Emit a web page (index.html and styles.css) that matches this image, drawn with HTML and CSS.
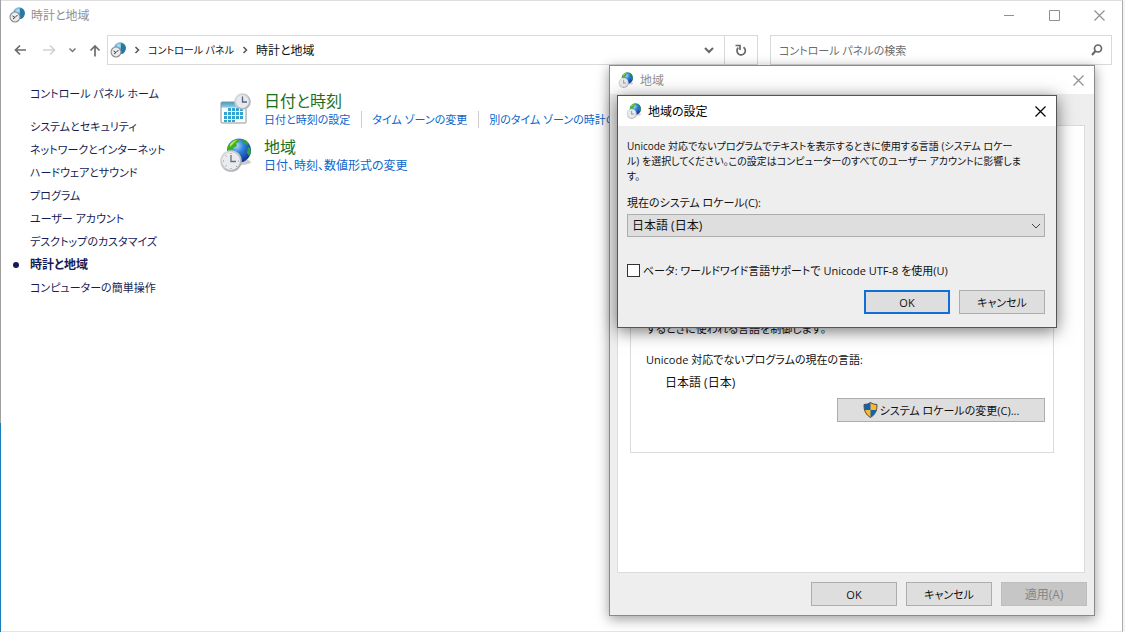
FILE: index.html
```html
<!DOCTYPE html>
<html lang="ja">
<head>
  <meta charset="UTF-8" />
  <title>時計と地域</title>
  <link rel="stylesheet" href="styles.css">
</head>
<body>

<!-- shared icons -->
<svg class="defs" aria-hidden="true">
  <defs>
    <radialGradient id="sea" cx="40%" cy="30%" r="75%">
      <stop offset="0" stop-color="#a9dcfa" />
      <stop offset="0.4" stop-color="#2f7fdc" />
      <stop offset="1" stop-color="#0a2c8c" />
    </radialGradient>
    <radialGradient id="seaPale" cx="40%" cy="30%" r="75%">
      <stop offset="0" stop-color="#c4e6f4" />
      <stop offset="0.5" stop-color="#4a9cc4" />
      <stop offset="1" stop-color="#14507e" />
    </radialGradient>
    <linearGradient id="rim" x1="0" y1="0" x2="1" y2="1">
      <stop offset="0" stop-color="#dfe1e5" />
      <stop offset="1" stop-color="#a2a6ae" />
    </linearGradient>
    <linearGradient id="paper" x1="0" y1="0" x2="0" y2="1">
      <stop offset="0" stop-color="#3d9cc4" />
      <stop offset="0.25" stop-color="#8fcbe2" />
      <stop offset="0.28" stop-color="#ffffff" />
    </linearGradient>
    <symbol id="region" viewBox="0 0 32 34">
      <ellipse cx="21" cy="24" rx="10" ry="3" fill="#000" opacity="0.2" />
      <circle cx="19" cy="12.500" r="12" fill="url(#sea)" />
      <path d="M8 8Q12 1 19 1q2 1 0 3l-3 1 1 3-4 2-1 4-3 2-2-2z" fill="#3fae2c" />
      <path d="M10 6q4-4 7-4l-4 4-3 3z" fill="#b8e84a" />
      <path d="M22 1q5 1 7 5l-3 1-3-2zM28 9l2 1q2 4-1 8l-2-3z" fill="#2fa33a" />
      <circle cx="11" cy="23" r="10.800" fill="url(#rim)" />
      <circle cx="11" cy="23" r="9" fill="#e9ebef" />
      <path d="M11 17v7M10.500 23.500h5.500" stroke="#6a707b" stroke-width="1.300" fill="none" />
      <path d="M11 15v1M11 30v1M3 23h1M18 23h1M5.500 17.500l1 1M16 28l1 1M5.500 28.500l1-1" stroke="#8d929b" fill="none" />
    </symbol>
    <symbol id="clockRegion" viewBox="0 0 16 16">
      <circle cx="10" cy="6" r="5.800" fill="url(#seaPale)" />
      <path d="M11 1q5 1 4.500 6T11 12z" fill="#2878a4" />
      <circle cx="6" cy="10" r="5.500" fill="#878c92" />
      <circle cx="6" cy="10" r="4.400" fill="#e9ebec" />
      <path d="M3.500 9L6 10.500 8.500 8M6 10.500l-2 1.500" stroke="#3d4248" stroke-width="1" fill="none" />
    </symbol>
    <symbol id="dateTime" viewBox="0 0 32 32">
      <rect x="1" y="9" width="25" height="21" rx="1" fill="url(#paper)" stroke="#8a949c" />
      <path d="M8 15h3v3H8zM12 15h3v3H12zM16 15h3v3H16zM20 15h3v3H20zM4 19h3v3H4zM8 19h3v3H8zM12 19h3v3H12zM16 19h3v3H16zM20 19h3v3H20zM4 23h3v3H4zM8 23h3v3H8zM12 23h3v3H12zM16 23h3v3H16zM20 23h3v3H20zM4 27h3v2H4zM8 27h3v2H8zM12 27h3v2H12z" fill="#31a3cf" />
      <circle cx="22.500" cy="8.500" r="8.300" fill="url(#rim)" />
      <circle cx="22.500" cy="8.500" r="6.500" fill="#e6e9f0" />
      <path d="M22.500 3.500V9H27" stroke="#5a6172" stroke-width="1.300" fill="none" />
    </symbol>
    <symbol id="close" viewBox="0 0 11 11">
      <path d="M0.500 0.500l10 10M10.500 0.500l-10 10" stroke="currentColor" stroke-width="1.200" fill="none" />
    </symbol>
    <symbol id="chevron" viewBox="0 0 6 8">
      <path d="M1.500 1l3 3-3 3" stroke="currentColor" stroke-width="1.500" fill="none" />
    </symbol>
  </defs>
</svg>

<div class="window">
  <header class="titlebar">
    <svg class="icon-16"><use href="#clockRegion" /></svg>
    <span class="title">時計と地域</span>
    <button class="caption" aria-label="最小化"><svg width="11" height="11"><path d="M0 5.500h10" stroke="currentColor" /></svg></button>
    <button class="caption" aria-label="最大化"><svg width="11" height="11"><path d="M0.500 0.500h10v10h-10z" stroke="currentColor" fill="none" /></svg></button>
    <button class="caption" aria-label="閉じる"><svg width="11" height="11"><use href="#close" /></svg></button>
  </header>

  <nav class="toolbar">
    <div class="arrows">
      <button aria-label="戻る"><svg width="13" height="12"><path d="M12 6H1.500M6 1.500L1.500 6 6 10.500" stroke="#6c6c6c" stroke-width="1.700" fill="none" /></svg></button>
      <button aria-label="進む" disabled><svg width="13" height="12"><path d="M0 6h11M7 1.500L11.500 6 7 10.500" stroke="#d2d2d2" stroke-width="1.700" fill="none" /></svg></button>
      <button class="small" aria-label="履歴"><svg width="7" height="6"><path d="M0.500 1.500l3 3 3-3" stroke="#777" stroke-width="1.500" fill="none" /></svg></button>
      <button aria-label="上へ"><svg width="12" height="13"><path d="M6 12.500V2M1.500 6.500L6 2l4.500 4.500" stroke="#6c6c6c" stroke-width="1.700" fill="none" /></svg></button>
    </div>
    <div class="address">
      <svg class="icon-16"><use href="#clockRegion" /></svg>
      <svg class="chevron"><use href="#chevron" /></svg>
      <a href="#">コントロール パネル</a>
      <svg class="chevron"><use href="#chevron" /></svg>
      <a class="kanji" href="#">時計と地域</a>
      <button class="drop" aria-label="以前の場所"><svg width="10" height="8"><path d="M1 2l4 4 4-4" stroke="#666" stroke-width="2" fill="none" /></svg></button>
      <button class="refresh" aria-label="更新"><svg width="12" height="12"><path d="M8.500 3.200A4.200 4.200 0 1 1 3.200 3.700M0.500 1.500H5V6" stroke="#666" stroke-width="1.700" fill="none" /></svg></button>
    </div>
    <div class="search">
      <input type="text" aria-label="検索" placeholder="コントロール パネルの検索">
      <svg width="12" height="12"><circle cx="7" cy="4.500" r="3.500" stroke="#666" stroke-width="1.700" fill="none" /><path d="M4.500 7L1 11" stroke="#666" stroke-width="2" /></svg>
    </div>
  </nav>

  <main class="content">
    <aside class="sidebar">
      <a class="home" href="#">コントロール パネル ホーム</a>
      <ul>
        <li><a href="#">システムとセキュリティ</a></li>
        <li><a href="#">ネットワークとインターネット</a></li>
        <li><a href="#">ハードウェアとサウンド</a></li>
        <li><a href="#">プログラム</a></li>
        <li><a href="#">ユーザー アカウント</a></li>
        <li><a href="#">デスクトップのカスタマイズ</a></li>
        <li class="current"><a href="#">時計と地域</a></li>
        <li><a href="#">コンピューターの簡単操作</a></li>
      </ul>
    </aside>

    <section class="categories">
      <div class="category">
        <svg class="icon-32"><use href="#dateTime" /></svg>
        <div>
          <h2><a href="#">日付と時刻</a></h2>
          <div class="tasks">
            <a href="#">日付と時刻の設定</a>
            <a href="#">タイム ゾーンの変更</a>
            <a href="#">別のタイム ゾーンの時計の追加</a>
          </div>
        </div>
      </div>
      <div class="category">
        <svg class="icon-32"><use href="#region" /></svg>
        <div>
          <h2><a href="#">地域</a></h2>
          <div class="tasks kanji">
            <a href="#">日付、時刻、数値形式の変更</a>
          </div>
        </div>
      </div>
    </section>
  </main>
</div>

<!-- region properties -->
<div class="dialog region" role="dialog" aria-labelledby="region-title">
  <header class="titlebar">
    <svg class="icon-16"><use href="#region" /></svg>
    <span class="title" id="region-title">地域</span>
    <button class="caption" aria-label="閉じる"><svg width="11" height="11"><use href="#close" /></svg></button>
  </header>
  <div class="tab-panel">
    <div class="group">
      <p>するときに使われる言語を制御します。</p>
      <p class="group-label">Unicode 対応でないプログラムの現在の言語:</p>
      <p class="group-value kanji">日本語 (日本)</p>
      <button class="btn wide">
        <svg width="15" height="16" viewBox="0 0 15 16">
          <path d="M7.500 0.500Q10 2.500 14 2.500q.5 9-6.500 13Q.5 11.500 1 2.500q4 0 6.500-2z" fill="#0f62b8" />
          <path d="M7.500 0.500Q10 2.500 14 2.500L14 8H7.500zM7.500 8v7.500Q2 12.500 1.200 8z" fill="#fcb827" />
          <path d="M7.500 0.500Q10 2.500 14 2.500q.5 9-6.500 13Q.5 11.500 1 2.500q4 0 6.500-2z" fill="none" stroke="#4a5157" />
        </svg>
        システム ロケールの変更(C)...
      </button>
    </div>
  </div>
  <footer class="buttons">
    <button class="btn">OK</button>
    <button class="btn">キャンセル</button>
    <button class="btn kanji" disabled>適用(A)</button>
  </footer>
</div>

<!-- system locale -->
<div class="dialog locale" role="dialog" aria-labelledby="locale-title">
  <header class="titlebar">
    <svg class="icon-16"><use href="#region" /></svg>
    <span class="title" id="locale-title">地域の設定</span>
    <button class="caption" aria-label="閉じる"><svg width="11" height="11"><use href="#close" /></svg></button>
  </header>
  <div class="dialog-body">
    <p>Unicode 対応でないプログラムでテキストを表示するときに使用する言語 (システム ロケー<br>ル) を選択してください。この設定はコンピューターのすべてのユーザー アカウントに影響しま<br>す。</p>
    <label class="field-label" for="locale">現在のシステム ロケール(C):</label>
    <div class="select">
      <select class="kanji" id="locale">
        <option>日本語 (日本)</option>
      </select>
      <svg width="10" height="6"><path d="M1 1l4 4 4-4" stroke="#444" fill="none" /></svg>
    </div>
    <div class="check">
      <input type="checkbox" id="utf8">
      <label for="utf8">ベータ: ワールドワイド言語サポートで Unicode UTF-8 を使用(U)</label>
    </div>
    <footer class="buttons">
      <button class="btn default">OK</button>
      <button class="btn">キャンセル</button>
    </footer>
  </div>
</div>

</body>
</html>
```
FILE: styles.css
```css
* {
  box-sizing: border-box;
}
body {
  margin: 0;
  min-height: 100vh;
  display: flex;
  position: relative;
  overflow: hidden;
  background: linear-gradient(#a0a0a0 67%, #1a7fb8 67%) left / 1px 100% no-repeat #f4f4f4;
  font-family: "Open Sans", "Noto Sans CJK JP", sans-serif;
  font-feature-settings: "palt", "kern";
  font-size: 11px;
  line-height: 15px;
  color: #111;
}
.defs {
  position: absolute;
  width: 0;
  height: 0;
}
p, h2, ul {
  margin: 0;
  padding: 0;
}
a {
  color: inherit;
  text-decoration: none;
}
button, input, select {
  font: inherit;
  font-feature-settings: inherit;
  color: inherit;
}
button {
  border: none;
  background: none;
  padding: 0;
}
.kanji, .title {
  font-size: 12px;
}
.icon-16 {
  width: 16px;
  height: 16px;
  flex: none;
}
.icon-32 {
  width: 32px;
  height: 34px;
  flex: none;
}

/* main window */
.window {
  flex: 1;
  min-width: 0;
  margin: 0 2px 0 1px;
  background: #fff;
  border-top: 1px solid #ddd;
  border-right: 1px solid #aaa;
  border-bottom: 1px solid #e4e4e4;
}
.titlebar {
  display: flex;
  align-items: center;
  height: 28px;
  padding-left: 8px;
  background: #fff;
  color: #909090;
}
.title {
  flex: 1;
  margin-left: 6px;
}
.caption {
  width: 45px;
  height: 28px;
  display: grid;
  place-items: center;
}
.toolbar {
  display: flex;
  height: 30px;
  margin: 6px 10px 0 12px;
}
.arrows {
  display: flex;
  align-items: center;
  width: 94px;
  padding-left: 1px;
  gap: 16px;
}
.arrows button {
  display: grid;
  place-items: center;
}
.arrows .small {
  margin: 0 -3px;
}
.address, .search {
  display: flex;
  align-items: center;
  border: 1px solid #d9d9d9;
}
.address {
  flex: 647;
  padding-left: 2px;
}
.address a:first-of-type {
  font-size: 10px;
}
.chevron {
  width: 6px;
  height: 8px;
  margin: 0 8px;
  color: #555;
}
.drop {
  width: 30px;
  height: 28px;
  margin-left: auto;
}
.refresh {
  width: 33px;
  height: 28px;
  border-left: 1px solid #d9d9d9;
}
.drop, .refresh {
  display: grid;
  place-items: center;
}
.search {
  flex: 324;
  margin-left: 12px;
  padding: 0 8px;
}
.search input {
  flex: 1;
  min-width: 0;
  border: none;
  padding: 0;
  outline: none;
}
.search input::placeholder {
  color: #6d6d6d;
}
.content {
  display: flex;
  padding: 21px 0 0 29px;
}
.sidebar {
  width: 190px;
  flex: none;
  color: #151c55;
}
.home {
  display: block;
  margin-bottom: 14px;
}
.sidebar ul {
  list-style: none;
}
.sidebar li {
  height: 23px;
  line-height: 23px;
}
.sidebar .current {
  font-size: 12px;
  font-weight: bold;
}
.current::before {
  content: "";
  float: left;
  width: 6px;
  height: 6px;
  margin: 9px 0 0 -17px;
  border-radius: 50%;
  background: #151c55;
}
.category {
  display: flex;
  height: 46px;
  gap: 12px;
  padding-top: 6px;
}
.category > div {
  margin-top: -1px;
  white-space: nowrap;
}
h2 {
  font-size: 16px;
  font-weight: normal;
  line-height: 20px;
  color: #17701c;
}
.tasks {
  display: flex;
  line-height: 17px;
  color: #0a66cc;
}
.tasks a + a {
  margin-left: 11px;
  padding-left: 10px;
  border-left: 1px solid #ccc;
}

/* dialogs */
.dialog {
  position: absolute;
  background: #eee;
  border: 1px solid #8a8a8a;
  box-shadow: 0 3px 12px rgba(0, 0, 0, 0.4);
}
.dialog .caption {
  width: 31px;
}
.region {
  left: 609px;
  top: 65px;
  width: 486px;
}
.locale {
  left: 617px;
  top: 95px;
  width: 440px;
  border-color: #555;
  box-shadow: 0 3px 16px rgba(0, 0, 0, 0.55);
}
.locale .titlebar {
  height: 30px;
  color: #000;
}
.tab-panel {
  min-height: 448px;
  margin: 31px 9px 0 7px;
  padding: 12px 30px 0 12px;
  background: #fff;
  border: 1px solid #dcdcdc;
}
.group {
  height: 315px;
  padding: 182px 8px 0 15px;
  border: 1px solid #dcdcdc;
}
.group-label {
  margin-top: 16px;
}
.group-value {
  margin: 8px 0 8px 19px;
}
.buttons {
  display: flex;
  justify-content: flex-end;
  gap: 9px;
}
.region .buttons {
  padding: 9px 7px 9px 0;
}
.btn {
  width: 86px;
  height: 24px;
  background: #dedede;
  border: 1px solid #adadad;
}
.btn.default {
  border: 2px solid #0f6fd6;
}
.btn:disabled {
  background: #c6c6c6;
  border-color: #bfbfbf;
  color: #858585;
}
.btn.wide {
  display: flex;
  align-items: center;
  justify-content: center;
  gap: 2px;
  width: 208px;
  margin-left: auto;
}
.dialog-body {
  padding: 13px 11px 13px 9px;
}
.dialog-body p {
  font-size: 10px;
  white-space: nowrap;
}
.field-label {
  display: block;
  margin: 11px 0 4px;
}
.select {
  display: grid;
  align-items: center;
}
.select > * {
  grid-area: 1 / 1;
}
.select svg {
  justify-self: end;
  margin-right: 4px;
  pointer-events: none;
}
select {
  appearance: none;
  width: 100%;
  height: 23px;
  padding: 0 4px;
  background: #dedede;
  border: 1px solid #adadad;
  border-radius: 0;
}
.check {
  display: flex;
  align-items: center;
  gap: 3px;
  margin: 26px 0 12px;
}
.check input {
  appearance: none;
  width: 13px;
  height: 13px;
  margin: 0;
  background: #fff;
  border: 1px solid #333;
}
```
